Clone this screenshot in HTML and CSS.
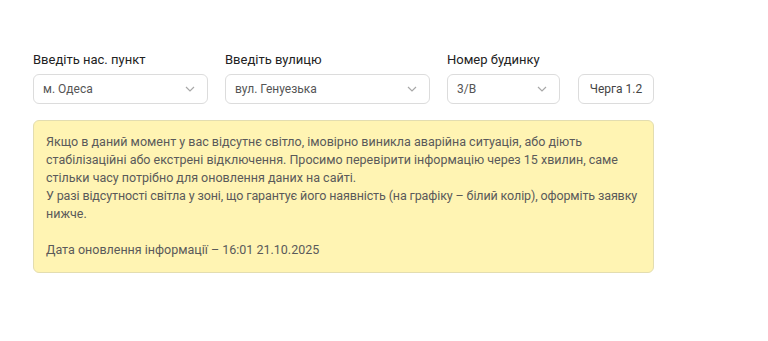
FILE: index.html
```html
<!DOCTYPE html>
<html lang="uk">
<head>
  <meta charset="UTF-8" />
  <title>Графік відключень</title>
  <link rel="stylesheet" href="styles.css">
</head>
<body>

  <div class="page">
    <!-- Address form -->
    <div class="filters">
      <div class="field field-city">
        <label>Введіть нас. пункт</label>
        <div class="select">
          <span>м. Одеса</span>
          <svg class="chevron" width="10" height="6" viewBox="0 0 10 6"><path d="M1 1l4 4 4-4" fill="none" stroke="#a8a8a8" stroke-width="1.2"/></svg>
        </div>
      </div>
      <div class="field field-street">
        <label>Введіть вулицю</label>
        <div class="select">
          <span>вул. Генуезька</span>
          <svg class="chevron" width="10" height="6" viewBox="0 0 10 6"><path d="M1 1l4 4 4-4" fill="none" stroke="#a8a8a8" stroke-width="1.2"/></svg>
        </div>
      </div>
      <div class="field field-house">
        <label>Номер будинку</label>
        <div class="select">
          <span>3/В</span>
          <svg class="chevron" width="10" height="6" viewBox="0 0 10 6"><path d="M1 1l4 4 4-4" fill="none" stroke="#a8a8a8" stroke-width="1.2"/></svg>
        </div>
      </div>
      <div class="field">
        <button class="queue">Черга 1.2</button>
      </div>
    </div>

    <!-- Notice -->
    <div class="notice">
      <p>Якщо в даний момент у вас відсутнє світло, імовірно виникла аварійна ситуація, або діють<br>
      стабілізаційні або екстрені відключення. Просимо перевірити інформацію через 15 хвилин, саме<br>
      стільки часу потрібно для оновлення даних на сайті.<br>
      <span class="tight">У разі відсутності світла у зоні, що гарантує його наявність (на графіку – білий колір), оформіть заявку</span><br>
      нижче.</p>
      <p>Дата оновлення інформації – 16:01 21.10.2025</p>
    </div>
  </div>

</body>
</html>
```

FILE: styles.css
```css
html, body {
  margin: 0;
  padding: 0;
  background: #ffffff;
  font-family: Roboto, "Noto Sans", sans-serif;
}

.page {
  width: 621px;
  padding: 52px 0 0 33px;
}

.filters {
  display: flex;
  align-items: flex-end;
  gap: 17px;
}

.field {
  display: flex;
  flex-direction: column;
}

.field label {
  font-size: 13px;
  line-height: 16px;
  color: #222;
  margin-bottom: 6px;
}

.field-city { width: 175px; }
.field-street { width: 205px; }
.field-house { width: 113px; }

.select {
  box-sizing: border-box;
  height: 30px;
  border: 1px solid #dcdcdc;
  border-radius: 6px;
  display: flex;
  align-items: center;
  justify-content: space-between;
  padding: 0 12px 0 9px;
  font-size: 12px;
  color: #555;
}

.chevron {
  display: block;
}

.queue {
  box-sizing: border-box;
  height: 30px;
  width: 76px;
  margin-left: 1px;
  border: 1px solid #dcdcdc;
  border-radius: 6px;
  background: #fff;
  font-family: Roboto, "Noto Sans", sans-serif;
  font-size: 12px;
  color: #444;
  padding: 0;
}

.notice {
  box-sizing: border-box;
  margin-top: 16px;
  width: 621px;
  background: #fff4b3;
  border: 1px solid #e3ddb0;
  border-radius: 6px;
  padding: 12px 0 13px 12px;
  font-size: 12.5px;
  line-height: 18px;
  color: #5a5a5a;
}

.notice p {
  margin: 0 0 18px;
}

.notice p:last-child {
  margin-bottom: 0;
}

.notice .tight {
  letter-spacing: -0.12px;
}
```
